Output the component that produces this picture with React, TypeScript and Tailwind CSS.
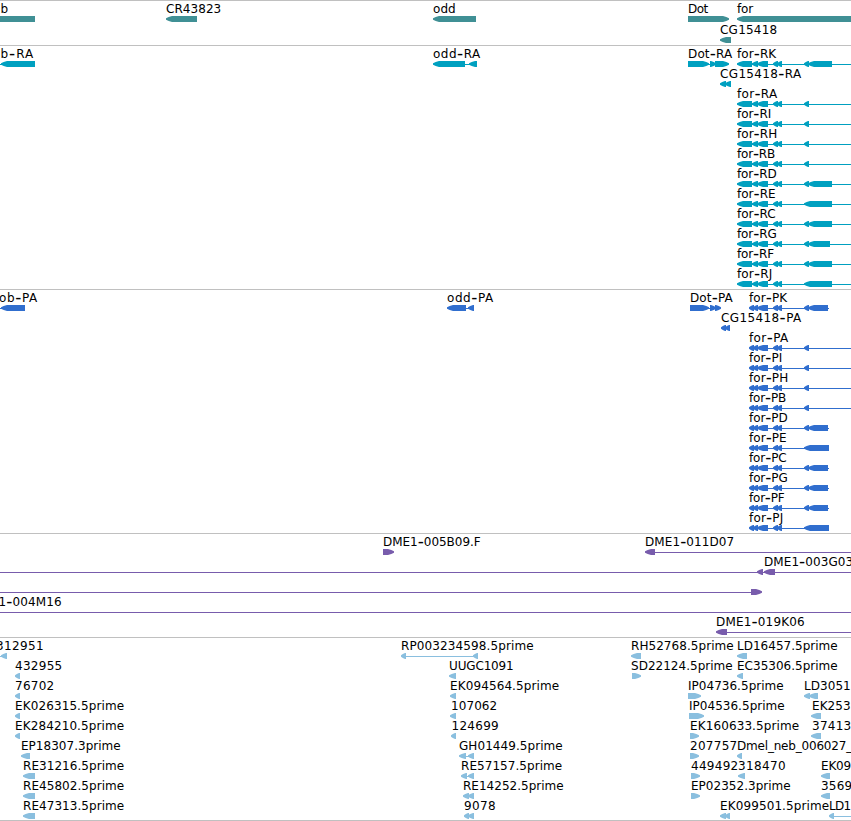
type Block = [number, number];

interface Feature {
  row: number;
  label?: string;
  /** Horizontal extent of the label. */
  text?: Block;
  blocks?: Block[];
  line?: Block;
  dir?: 'left' | 'right' | 'none';
}

interface TrackProps {
  name: string;
  height: number;
  color: string;
  pitch?: number;
  features: Feature[];
}

const f = (
  row: number,
  label: string,
  start: number,
  end: number,
  blocks: Block[] = [],
  line?: Block,
  dir: Feature['dir'] = 'left',
): Feature => ({ row, label, text: [start, end], blocks, line, dir });

const genes: Feature[] = [
  f(0, 'b', 1, 8, [[-2, 35]], undefined, 'none'),
  f(0, 'CR43823', 166.5, 221, [[166, 197]]),
  f(0, 'odd', 433.5, 455.5, [[433, 476]]),
  f(0, 'Dot', 688.5, 708, [[688, 729]], undefined, 'right'),
  f(0, 'for', 737.5, 753, [[737, 870]]),
  f(1, 'CG15418', 720.5, 777, [[720, 731]]),
];

type Tail = 'short' | 'split' | 'wide' | 'splitG';

const rnaTail: Record<Tail, Block[]> = {
  short: [[804, 809]],
  split: [[804, 809], [808, 832]],
  splitG: [[804, 809], [808, 830]],
  wide: [[804, 832]],
};
const proteinTail: Record<Tail, Block[]> = {
  short: [[804, 809]],
  split: [[804, 809], [808, 828]],
  splitG: [[804, 809], [808, 828]],
  wide: [[804, 829]],
};

const isoforms: { row: number; id: string; tail: Tail; rEnd: number; pEnd: number }[] = [
  { row: 0, id: 'K', tail: 'split', rEnd: 776, pEnd: 787 },
  { row: 2, id: 'A', tail: 'short', rEnd: 777, pEnd: 788 },
  { row: 3, id: 'I', tail: 'short', rEnd: 771, pEnd: 782 },
  { row: 4, id: 'H', tail: 'short', rEnd: 777, pEnd: 788 },
  { row: 5, id: 'B', tail: 'short', rEnd: 775, pEnd: 786 },
  { row: 6, id: 'D', tail: 'split', rEnd: 776.5, pEnd: 787.5 },
  { row: 7, id: 'E', tail: 'wide', rEnd: 775.5, pEnd: 786.5 },
  { row: 8, id: 'C', tail: 'split', rEnd: 775.5, pEnd: 786.5 },
  { row: 9, id: 'G', tail: 'splitG', rEnd: 776.5, pEnd: 787.5 },
  { row: 10, id: 'F', tail: 'split', rEnd: 774, pEnd: 784.5 },
  { row: 11, id: 'J', tail: 'wide', rEnd: 772, pEnd: 783 },
];

const transcripts: Feature[] = [
  f(0, 'b-RA', 1, 33, [[1, 35]], [0, 6]),
  f(0, 'odd-RA', 433.5, 480, [[433, 465], [469, 477]], [465, 472]),
  f(0, 'Dot-RA', 688.5, 732, [[688, 709], [710, 716], [715, 729]], [706, 716], 'right'),
  f(1, 'CG15418-RA', 720.5, 801, [[720, 726], [725, 731]]),
  ...isoforms.map(({ row, id, tail, rEnd }) =>
    f(row, 'for-R' + id, 737.5, rEnd,
      [[737, 752], [752, 758], [757, 768], [773, 778], [777, 782], ...rnaTail[tail]], [740, 851])),
];

const proteins: Feature[] = [
  f(0, 'ob-PA', -0.5, 37, [[1, 25]], [0, 6]),
  f(0, 'odd-PA', 447.5, 493, [[447, 466], [468, 474]], [466, 471]),
  f(0, 'Dot-PA', 690.5, 732.5, [[690, 709], [710, 716], [715, 721]], [706, 716], 'right'),
  f(1, 'CG15418-PA', 721.5, 801, [[721, 726], [725, 730]]),
  ...isoforms.map(({ row, id, tail, pEnd }) =>
    f(row, 'for-P' + id, 749.5, pEnd,
      [[749, 754], [753, 758], [757, 768], [773, 778], [777, 782], ...proteinTail[tail]],
      [752, tail === 'short' ? 851 : 829])),
];

const clones: Feature[] = [
  f(0, 'DME1-005B09.F', 383.5, 480.5, [[383, 394]], undefined, 'right'),
  f(0, 'DME1-011D07', 645.5, 734, [[645, 655]], [650, 851]),
  { row: 1, blocks: [[757, 763]], line: [0, 851] },
  f(1, 'DME1-003G03', 764.5, 853, [[764, 775]]),
  { row: 2, blocks: [[751, 762]], line: [0, 755], dir: 'right' },
  f(3, '1-004M16', -1, 61.5, [], [0, 851]),
  f(4, 'DME1-019K06', 716.5, 804.5, [[716, 727]], [720, 851]),
];

const ests: Feature[] = [
  f(0, '312951', -3.5, 43.5, [[1, 7]], [0, 3]),
  f(0, 'RP003234598.5prime', 401.5, 533.5, [[401, 406], [473, 478]], [402, 476]),
  f(0, 'RH52768.5prime', 631.5, 733.5, [[631, 641]]),
  f(0, 'LD16457.5prime', 737.5, 837.5, [[737, 747]]),
  f(1, '432955', 15.5, 62, [[15, 20]]),
  f(1, 'UUGC1091', 449.5, 513.5, [[449, 456]]),
  f(1, 'SD22124.5prime', 631.5, 732.5, [[632, 641]], undefined, 'right'),
  f(1, 'EC35306.5prime', 737.5, 837.5, [[737, 743]]),
  f(2, '76702', 15.5, 54, [[15, 20]]),
  f(2, 'EK094564.5prime', 450.5, 559, [[450, 456]]),
  f(2, 'IP04736.5prime', 688.5, 783.5, [[688, 701]], undefined, 'right'),
  f(2, 'LD3051', 804.5, 850.5, [[804, 810], [809, 818]]),
  f(3, 'EK026315.5prime', 15.5, 124, [[15, 20]]),
  f(3, '107062', 451.5, 497, [[450, 456]]),
  f(3, 'IP04536.5prime', 689.5, 784.5, [[689, 704]], undefined, 'right'),
  f(3, 'EK253', 812.5, 850.5, [[811, 821]]),
  f(4, 'EK284210.5prime', 15.5, 124, [[15, 20]]),
  f(4, '124699', 452, 498.5, [[451, 456]]),
  f(4, 'EK160633.5prime', 690.5, 799, [[690, 699]], undefined, 'right'),
  f(4, '37413', 812.5, 851, [[811, 821]]),
  f(5, 'EP18307.3prime', 21.5, 120.5, [[21, 30]]),
  f(5, 'GH01449.5prime', 459.5, 562.5, [[459, 466], [468, 474]], [464, 470]),
  f(5, '207757', 690.5, 737, [[690, 699]], undefined, 'right'),
  f(5, 'Dmel_neb_006027_', 737.5, 852, [[737, 742]]),
  f(6, 'RE31216.5prime', 23.5, 124, [[23, 35]]),
  f(6, 'RE57157.5prime', 461.5, 562, [[461, 467], [468, 474]], [464, 470]),
  f(6, '449492', 691.5, 738, [[691, 700]], undefined, 'right'),
  f(6, '318470', 738.5, 785.5, [[738, 745]]),
  f(6, 'EK09', 821.5, 851, [[821, 830]]),
  f(7, 'RE45802.5prime', 23.5, 124, [[23, 35]]),
  f(7, 'RE14252.5prime', 463.5, 563.5, [[463, 469], [468, 474]]),
  f(7, 'EP02352.3prime', 691.5, 790.5, [[691, 700]], undefined, 'right'),
  f(7, '3569', 821.5, 852, [[821, 830]]),
  f(8, 'RE47313.5prime', 23.5, 124, [[23, 35]]),
  f(8, '9078', 464.5, 495.5, [[464, 469], [468, 474]]),
  f(8, 'EK099501.5prime', 720.5, 829, [[720, 726], [725, 730]]),
  f(8, 'LD1', 829.5, 851, [[829, 834]], [831, 851]),
];

/** Block outline with a blunt, slightly convex head on its leading end. */
function arrow([a, b]: Block, y: number, dir: Feature['dir']) {
  if (dir === 'none') return `${a},${y} ${b},${y} ${b},${y + 6} ${a},${y + 6}`;
  const head = Math.min(6, b - a - 1);
  const mid = head * 0.45;
  const tip = dir === 'right' ? b : a;
  const tail = dir === 'right' ? a : b;
  const s = dir === 'right' ? -1 : 1;
  return [
    [tail, y],
    [tip + s * head, y],
    [tip + s * mid, y + 1],
    [tip, y + 2.2],
    [tip, y + 3.8],
    [tip + s * mid, y + 5],
    [tip + s * head, y + 6],
    [tail, y + 6],
  ]
    .map((p) => p.join(','))
    .join(' ');
}

/** Label text, with the hyphen enlarged to a short dash and lowered to mid-height. */
function Label({ text }: { text: string }) {
  const at = text.indexOf('-');
  if (at < 0) return <>{text}</>;
  return (
    <>
      {text.slice(0, at)}
      <tspan dy={1} className="text-[17px]">-</tspan>
      <tspan dy={-1}>{text.slice(at + 1)}</tspan>
    </>
  );
}

function Track({ name, height, color, pitch = 20, features }: TrackProps) {
  return (
    <section aria-label={name} className="w-full border-t border-[#c0c0c0]">
      <svg width={851} height={height - 1} className={`block overflow-visible ${color}`} fill="currentColor">
        {features.map((item, i) => {
          const top = item.row * pitch + 15;
          return (
            <g key={i}>
              {item.line && (
                <rect x={item.line[0]} y={top + 3} width={item.line[1] - item.line[0]} height={1} />
              )}
              {item.blocks?.map((block, j) => (
                <polygon key={j} points={arrow(block, top, item.dir)} />
              ))}
              {item.label && item.text && (
                <text
                  x={item.text[0] - 0.5}
                  y={top - 3}
                  textLength={item.text[1] - item.text[0] + 0.7}
                  className="fill-black text-[12px]"
                >
                  <Label text={item.label} />
                </text>
              )}
            </g>
          );
        })}
      </svg>
    </section>
  );
}

export default function App() {
  return (
    <main className="flex w-[851px] flex-col overflow-hidden border-b border-[#c0c0c0] bg-white font-['DejaVu_Sans',sans-serif]">
      <Track name="Genes" height={45} pitch={21} color="text-[#409095]" features={genes} />
      <Track name="Transcripts" height={244} color="text-[#00a0c0]" features={transcripts} />
      <Track name="Proteins" height={244} color="text-[#306ece]" features={proteins} />
      <Track name="Clones" height={104} color="text-[#785cac]" features={clones} />
      <Track name="ESTs" height={183} color="text-[#8abfdf]" features={ests} />
    </main>
  );
}
